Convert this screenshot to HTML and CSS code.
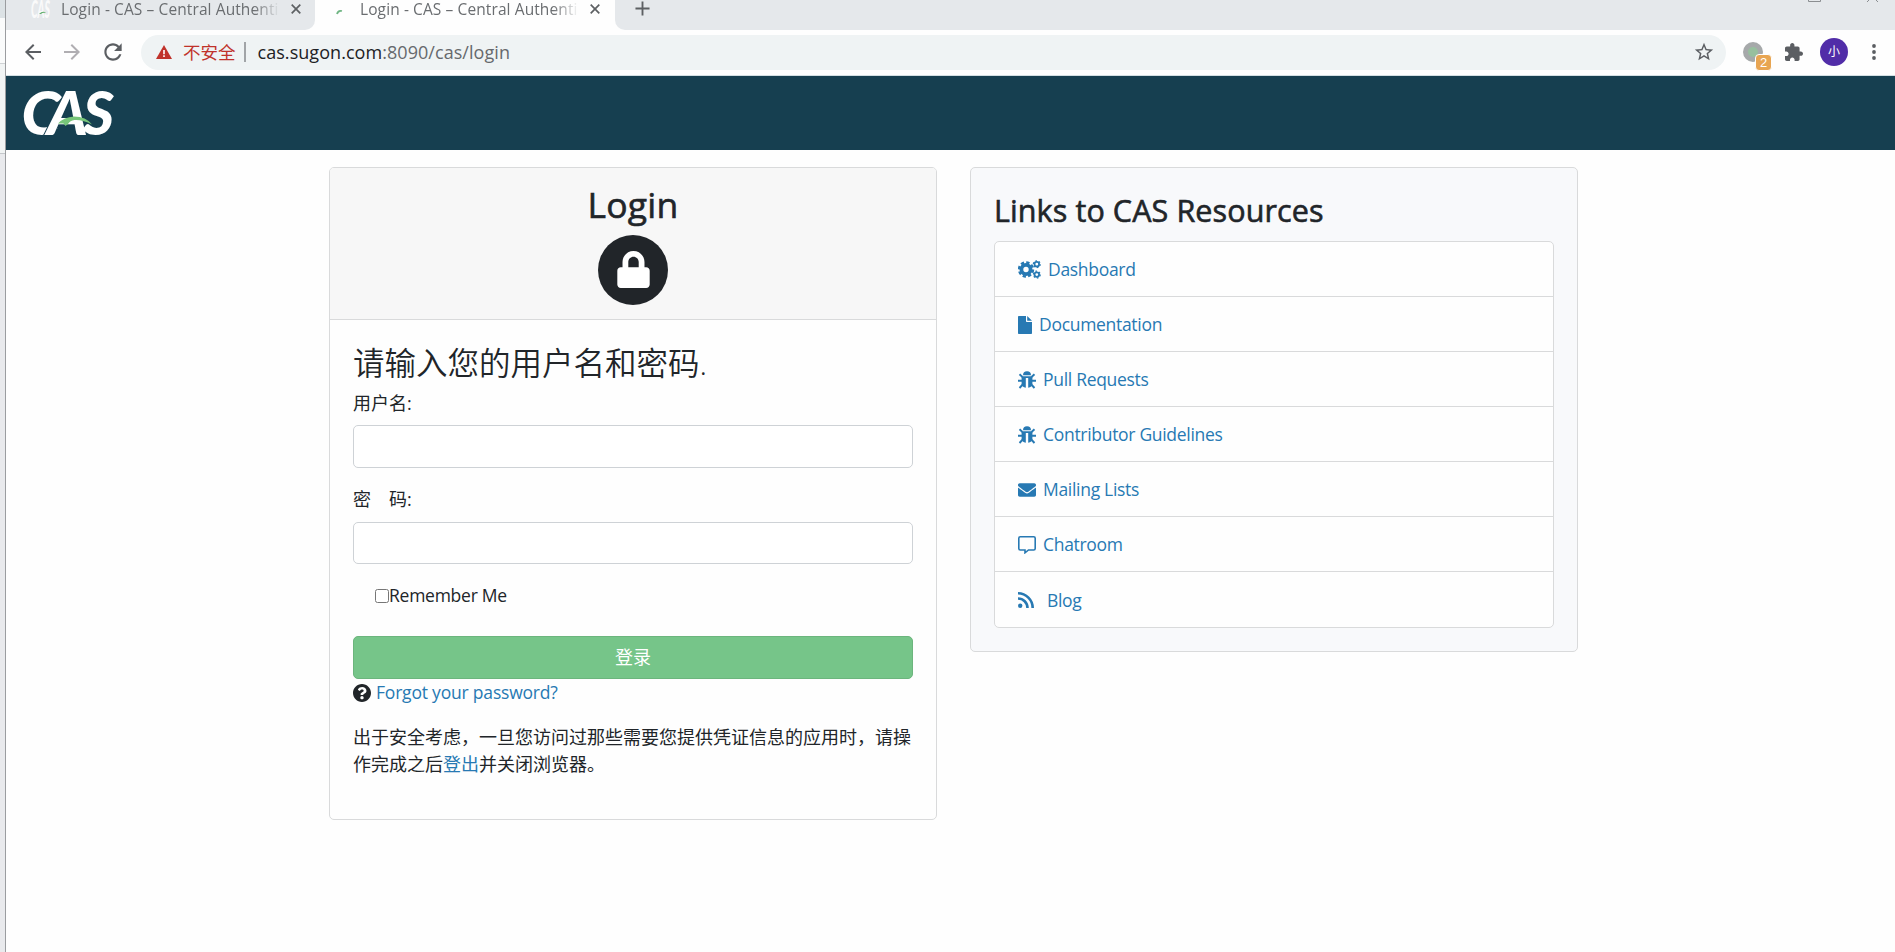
FILE: index.html
```html
<!DOCTYPE html>
<html lang="zh-CN">
<head>
<meta charset="utf-8">
<title>Login - CAS – Central Authentication Service</title>
<link rel="stylesheet" href="styles.css">
</head>
<body>
<svg class="defs" width="0" height="0">
  <symbol id="bug" viewBox="0 0 18 18">
    <path d="M5 4.200a4 3.900 0 0 1 8 0z"/>
    <path d="M3.600 5.200h10.800v7.500c0 2.200-1.800 3.700-4.200 4V7H7.800v9.700c-2.400-.3-4.200-1.800-4.200-4z"/>
    <path d="M1.500 3.200 4.500 6M16.500 3.200 13.500 6M0 9.800h4M18 9.800h-4M1.500 17l3.200-3.500M16.500 17l-3.200-3.500" fill="none" stroke="currentColor" stroke-width="1.900"/>
  </symbol>
</svg>
<div class="edge"><i class="edge-a"></i><i class="edge-b"></i><i class="edge-c"></i><i class="edge-d"></i></div>
<div class="window">
  <div class="tabs">
    <div class="tab tab-idle">
      <svg class="fav" viewBox="0 0 20 20"><text x="0" y="18" textLength="19" lengthAdjust="spacingAndGlyphs" class="fav-text">CAS</text><path d="M8 14q4-4 7-1q-3-1-5 1z" fill="#5fae6b"/></svg>
      <span class="tab-title">Login - CAS – Central Authenti</span>
      <svg class="x" viewBox="0 0 10 10"><path d="M.7.7l8.600 8.600M9.300.7.7 9.300"/></svg>
    </div>
    <div class="tab tab-active">
      <svg class="spin" viewBox="0 0 8 6"><path d="M1 5q1-4 5-3" fill="none" stroke="#6fb583" stroke-width="1.800"/></svg>
      <span class="tab-title">Login - CAS – Central Authenti</span>
      <svg class="x" viewBox="0 0 10 10"><path d="M.7.7l8.600 8.600M9.300.7.7 9.300"/></svg>
    </div>
    <div class="tab-rest">
      <svg class="plus" viewBox="0 0 16 16"><path d="M8 .5v15M.5 8h15"/></svg>
      <svg class="winbtns" viewBox="0 0 72 3"><path d="M.5 0v1.500h12V0M59 2l3-3M70 2l-3-3" fill="none" stroke="#8b8e91"/></svg>
    </div>
  </div>
  <div class="toolbar">
    <svg class="nav" viewBox="0 0 24 24"><path d="M20 11H7.830l5.590-5.590L12 4l-8 8 8 8 1.410-1.410L7.830 13H20v-2z"/></svg>
    <svg class="nav nav-off" viewBox="0 0 24 24"><path d="M4 11h12.170l-5.590-5.590L12 4l8 8-8 8-1.410-1.410L16.170 13H4v-2z"/></svg>
    <svg class="nav nav-reload" viewBox="0 0 24 24"><path d="M17.650 6.350C16.200 4.900 14.210 4 12 4c-4.420 0-7.990 3.580-7.990 8s3.570 8 7.990 8c3.730 0 6.840-2.550 7.730-6h-2.080c-.82 2.330-3.040 4-5.650 4-3.310 0-6-2.690-6-6s2.690-6 6-6c1.660 0 3.140.69 4.220 1.780L13 11h7V4l-2.350 2.350z"/></svg>
    <div class="omnibox">
      <svg class="warn" viewBox="0 0 16 14"><path d="M8 0l8 14H0z" fill="#c0322b"/><path d="M7.200 5h1.600v4.200H7.200zM7.200 10.300h1.600v1.600H7.200z" fill="#fff"/></svg>
      <span class="unsafe">不安全</span>
      <i class="divider"></i>
      <span class="url"><b>cas.sugon.com</b>:8090/cas/login</span>
      <svg class="star" viewBox="0 0 24 24"><path d="M22 9.240l-7.190-.62L12 2 9.190 8.630 2 9.240l5.460 4.730L5.820 21 12 17.270 18.180 21l-1.630-7.030L22 9.240zM12 15.400l-3.760 2.270 1-4.280-3.320-2.880 4.380-.38L12 6.100l1.710 4.040 4.380.38-3.320 2.880 1 4.280L12 15.400z"/></svg>
    </div>
    <div class="ext"><span class="badge">2</span></div>
    <svg class="puzzle" viewBox="2 1 21 21"><path d="M20.500 11H19V7c0-1.100-.9-2-2-2h-4V3.500C13 2.120 11.880 1 10.500 1S8 2.120 8 3.500V5H4c-1.100 0-1.990.9-1.990 2v3.800H3.500c1.490 0 2.700 1.210 2.700 2.700s-1.210 2.700-2.700 2.700H2V20c0 1.100.9 2 2 2h3.800v-1.500c0-1.490 1.210-2.700 2.700-2.700 1.490 0 2.700 1.210 2.700 2.700V22H17c1.100 0 2-.9 2-2v-4h1.500c1.380 0 2.500-1.120 2.500-2.500S21.880 11 20.500 11z"/></svg>
    <div class="avatar">小</div>
    <svg class="dots" viewBox="0 0 4 16"><circle cx="2" cy="2" r="1.900"/><circle cx="2" cy="8" r="1.900"/><circle cx="2" cy="14" r="1.900"/></svg>
  </div>
  <header class="brand">
    <svg class="logo" viewBox="0 0 92 48">
      <text y="45.500" class="logo-text"><tspan x="-1.500" textLength="39" lengthAdjust="spacingAndGlyphs">C</tspan><tspan x="24" textLength="41" lengthAdjust="spacingAndGlyphs" class="logo-mid">A</tspan><tspan x="60" textLength="31" lengthAdjust="spacingAndGlyphs">S</tspan></text>
      <path d="M35 34.500Q41 28 51 27.500Q63 27.500 69 35.500Q60 30.500 51.500 31Q47 31.500 45 35L42.500 37L40.500 34.500z" fill="#78c67a"/>
    </svg>
  </header>
  <main class="content">
    <section class="card login">
      <div class="card-head">
        <h1>Login</h1>
        <div class="lock"><svg viewBox="0 0 448 512"><path d="M400 224h-24v-72C376 68.200 307.800 0 224 0S72 68.200 72 152v72H48c-26.500 0-48 21.500-48 48v192c0 26.500 21.500 48 48 48h352c26.500 0 48-21.500 48-48V272c0-26.500-21.500-48-48-48zm-104 0H152v-72c0-39.700 32.300-72 72-72s72 32.300 72 72v72z"/></svg></div>
      </div>
      <form class="card-body">
        <h2>请输入您的用户名和密码.</h2>
        <label class="label" for="u">用户名:</label>
        <input class="field" id="u" type="text">
        <label class="label label-pw" for="p">密&#12288;码:</label>
        <input class="field field-pw" id="p" type="password">
        <label class="remember"><input type="checkbox"><span>Remember Me</span></label>
        <button class="submit" type="button">登录</button>
        <div class="forgot"><svg viewBox="8 8 496 496"><path d="M504 256c0 136.997-111.043 248-248 248S8 392.997 8 256C8 119.083 119.043 8 256 8s248 111.083 248 248zM262.655 90c-54.497 0-89.255 22.957-116.549 63.758-3.536 5.286-2.353 12.415 2.715 16.258l34.699 26.310c5.205 3.947 12.621 3.008 16.665-2.122 17.864-22.658 30.113-35.797 57.303-35.797 20.429 0 45.698 13.148 45.698 32.958 0 14.976-12.363 22.667-32.534 33.976C247.128 238.528 216 254.941 216 296v4c0 6.627 5.373 12 12 12h56c6.627 0 12-5.373 12-12v-1.333c0-28.462 83.186-29.647 83.186-106.667 0-58.002-60.165-102-116.531-102zM256 338c-25.365 0-46 20.635-46 46 0 25.364 20.635 46 46 46s46-20.636 46-46c0-25.365-20.635-46-46-46z"/></svg><a>Forgot your password?</a></div>
        <p class="notice">出于安全考虑，一旦您访问过那些需要您提供凭证信息的应用时，请操作完成之后<a>登出</a>并关闭浏览器。</p>
      </form>
    </section>
    <aside class="card links">
      <h2 class="links-title">Links to CAS Resources</h2>
      <ul class="list">
        <li><svg width="23" height="19" viewBox="0 0 23 19"><g fill="none" stroke="currentColor"><circle cx="8" cy="9.500" r="4.600" stroke-width="3.800"/><circle cx="8" cy="9.500" r="7" stroke-width="2.400" stroke-dasharray="3.300 2.200"/><circle cx="18.800" cy="4.200" r="2.300" stroke-width="1.800"/><circle cx="18.800" cy="4.200" r="3.400" stroke-width="1.300" stroke-dasharray="1.560 2"/><circle cx="18.800" cy="14.600" r="2.300" stroke-width="1.800"/><circle cx="18.800" cy="14.600" r="3.400" stroke-width="1.300" stroke-dasharray="1.560 2"/></g></svg><a>Dashboard</a></li>
        <li><svg width="14" height="18" viewBox="0 0 14 18"><path d="M0 .8Q0 0 .8 0H8v5.200q0 .8.8.8H14v11.200q0 .8-.8.8H.8Q0 18 0 17.200zM9.200 0 14 4.800H9.200z"/></svg><a>Documentation</a></li>
        <li><svg width="18" height="18"><use href="#bug"/></svg><a>Pull Requests</a></li>
        <li><svg width="18" height="18"><use href="#bug"/></svg><a>Contributor Guidelines</a></li>
        <li><svg width="18" height="18" viewBox="0 0 512 512"><path d="M502.300 190.800c3.900-3.100 9.700-.2 9.700 4.700V400c0 26.500-21.500 48-48 48H48c-26.500 0-48-21.500-48-48V195.600c0-5 5.700-7.800 9.700-4.700 22.400 17.400 52.100 39.500 154.100 113.600 21.100 15.400 56.700 47.800 92.200 47.600 35.700.3 72-32.800 92.300-47.600 102-74.100 131.600-96.300 154-113.700zM256 320c23.200.4 56.600-29.200 73.400-41.400 132.700-96.300 142.800-104.700 173.400-128.700 5.800-4.500 9.200-11.500 9.200-18.900v-19c0-26.500-21.500-48-48-48H48c-26.500 0-48 21.500-48 48v19c0 7.400 3.400 14.300 9.200 18.900 30.600 23.900 40.700 32.400 173.400 128.700 16.800 12.200 50.200 41.800 73.400 41.400z"/></svg><a>Mailing Lists</a></li>
        <li><svg width="18" height="18" viewBox="0 0 18 18"><path d="M2.300.8h13.400q1.500 0 1.500 1.500v10.200q0 1.500-1.500 1.500H10.500L7 16.800V14H2.300Q.8 14 .8 12.500V2.300Q.8.8 2.300.8z" fill="none" stroke="currentColor" stroke-width="1.600"/></svg><a>Chatroom</a></li>
        <li class="blog"><svg width="16" height="16" viewBox="0 0 16 16"><circle cx="2.200" cy="13.800" r="2.200"/><path d="M0 6.500A9.500 9.500 0 0 1 9.500 16M0 1.300A14.700 14.700 0 0 1 14.700 16" fill="none" stroke="currentColor" stroke-width="2.600"/></svg><a>Blog</a></li>
      </ul>
    </aside>
  </main>
</div>
</body>
</html>
```
FILE: styles.css
```css
* { box-sizing: border-box; }
body {
  margin: 0;
  display: flex;
  width: 1895px;
  height: 952px;
  overflow: hidden;
  background: #fefefe;
  color: #212529;
  font: 17.5px/27px "Open Sans", "Noto Sans CJK SC", sans-serif;
}
h1, h2, p, ul { margin: 0; padding: 0; }
svg { display: block; flex: none; fill: currentColor; }
.defs { position: absolute; }
a { color: #2779b3; }

/* sliver of the window behind */
.edge { display: flex; flex-direction: column; width: 6px; border-right: 1px solid #9b9da0; }
.edge-a { height: 18px; background: #dce2e5; }
.edge-b { height: 46px; background: #fafbfb; border-bottom: 1px solid #cfd2d4; }
.edge-c { height: 90px; background: #f1f4f4; border-bottom: 1px solid #c4c7ca; }
.edge-d { flex: 1; background: #e9eaed; }
.window { flex: 1; min-width: 0; }

.tabs { display: flex; height: 30px; background: #fefefe; color: #6a6d70; font-size: 15.5px; }
.tab { display: flex; height: 30px; }
.tab-idle { width: 309px; padding-left: 25px; background: #e5e8eb; border-radius: 0 0 10px 0; }
.tab-active { width: 300px; padding-left: 21px; }
.fav { width: 20px; height: 20px; margin-right: 10px; }
.fav-text { font: italic 900 25px Lato, sans-serif; fill: #fafafa; }
.spin { width: 8px; height: 6px; margin: 9px 16px 0 0; }
.tab-title {
  width: 219px;
  line-height: 19px;
  white-space: nowrap;
  letter-spacing: 0.1px;
  mask-image: linear-gradient(to right, #000 88%, transparent 100%);
}
.x { width: 10px; height: 10px; margin: 4px 0 0 11px; fill: none; stroke: #5d6063; stroke-width: 1.7; }
.tab-rest { display: flex; flex: 1; justify-content: space-between; background: #e5e8eb; border-radius: 0 0 0 10px; }
.plus { width: 15px; height: 15px; margin: 1px 0 0 20px; fill: none; stroke: #5d6063; stroke-width: 2; }
.winbtns { width: 72px; height: 3px; margin-right: 15px; }

.toolbar { display: flex; align-items: center; height: 46px; padding: 0 19px 1px 15px; border-bottom: 1px solid #d3dfe3; background: #fefefe; color: #5b5e62; }
.nav { width: 24px; height: 24px; margin-right: 15px; }
.nav-off { color: #b0aeb2; margin-right: 16px; }
.nav-reload { width: 26px; height: 26px; }
.omnibox { display: flex; align-items: center; width: 1585px; height: 35px; padding: 0 11px 0 15px; border-radius: 18px; background: #eff3f4; }
.warn { width: 16px; height: 14px; }
.unsafe { margin-left: 11px; color: #c0322b; font-size: 17.5px; }
.divider { width: 2px; height: 20px; margin: 0 12px 0 8px; background: #a1a4a7; }
.url { color: #66696d; font-size: 18px; letter-spacing: 0.05px; flex: 1; }
.url b { color: #202124; font-weight: 400; }
.star { width: 22px; height: 22px; }
.ext { position: relative; width: 20px; height: 20px; margin-left: 17px; border: 5px solid #a6a9aa; border-radius: 50%; background: #97bf9e; }
.badge { position: absolute; left: 7px; top: 7px; width: 17px; height: 17px; border: 1px solid #fefefe; border-radius: 4px; background: #e8a552; color: #fff; font: 13px/15px "Liberation Sans", sans-serif; text-align: center; }
.puzzle { width: 18px; height: 18px; margin-left: 22px; }
.avatar { width: 28px; height: 28px; margin-left: 17px; border-radius: 50%; background: #512da8; color: #fff; font-size: 12px; line-height: 27px; text-align: center; }
.dots { width: 4px; height: 16px; margin-left: 24px; }

.brand { height: 74px; padding: 13px 0 0 17px; background: #163f50; }
.logo { width: 92px; height: 48px; overflow: visible; }
.logo-text { font: italic 900 61px Lato, sans-serif; fill: #fff; }
.logo-mid { stroke: #163f50; stroke-width: 2px; paint-order: stroke; }

.content { display: flex; align-items: flex-start; gap: 33px; padding: 17px 0 0 323px; }
.card { width: 608px; border: 1px solid #d9dadb; border-radius: 5px; }
.login { height: 653px; }
.card-head { display: flex; flex-direction: column; align-items: center; height: 152px; padding-top: 15px; border-bottom: 1px solid #d9dadb; background: #f7f7f7; border-radius: 4px 4px 0 0; }
h1 { font-size: 35.5px; font-weight: 400; line-height: 43px; letter-spacing: 0.2px; -webkit-text-stroke: 0.6px currentColor; }
.lock { display: grid; place-items: center; width: 70px; height: 70px; margin-top: 9px; border-radius: 50%; background: #212529; color: #fff; }
.lock svg { width: 33px; height: 37px; margin-bottom: 2px; }
.card-body { display: flex; flex-direction: column; padding: 23px 23px 0; }
.card-body h2 { font-size: 31.5px; font-weight: 350; line-height: 40px; }
.label { height: 27px; margin-top: 7px; font-size: 18px; }
.field { width: 100%; height: 43px; margin: 8px 0 0; border: 1px solid #ced2d6; border-radius: 5px; background: #fff; }
.label-pw { margin-top: 18px; }
.field-pw { margin-top: 9px; height: 42px; }
.remember { display: flex; align-items: center; height: 27px; margin: 18px 0 0 22px; letter-spacing: -0.25px; }
.remember input { width: 14px; height: 14px; margin: 0; }
.submit { width: 100%; height: 43px; margin-top: 27px; padding: 0; border: 1px solid #6cb57d; border-radius: 5px; background: #76c589; color: #fff; font: 18px/27px "Open Sans", "Noto Sans CJK SC", sans-serif; }
.forgot { display: flex; align-items: center; height: 27px; gap: 5px; letter-spacing: -0.2px; }
.forgot svg { width: 18px; height: 18px; }
.notice { margin-top: 18px; font-size: 18px; }

.links { height: 485px; padding: 22px 23px 0; background: #f8f9fb; }
.links-title { height: 51px; font-size: 30.5px; font-weight: 400; line-height: 41px; letter-spacing: 0.1px; -webkit-text-stroke: 0.6px currentColor; }
.list { height: 387px; display: grid; grid-template-rows: repeat(7, 1fr); border: 1px solid #d9dadb; border-radius: 5px; background: #fefefe; list-style: none; }
.list li { display: flex; align-items: center; gap: 7px; padding: 1px 0 0 23px; color: #2779b3; letter-spacing: -0.3px; border-bottom: 1px solid #d9dadb; }
.list li:last-child { border-bottom: 0; }
.list .blog { gap: 13px; }
```
